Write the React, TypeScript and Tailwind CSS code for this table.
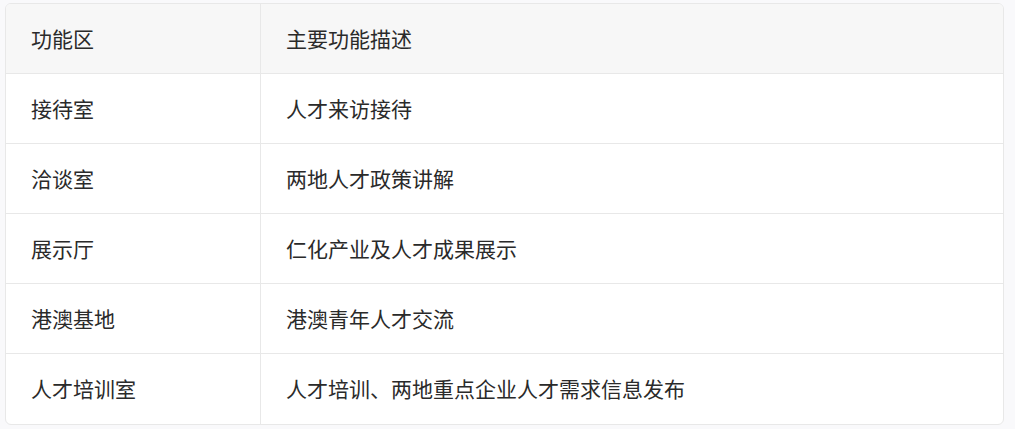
import React from "react";

const rows: [string, string][] = [
  ["接待室", "人才来访接待"],
  ["洽谈室", "两地人才政策讲解"],
  ["展示厅", "仁化产业及人才成果展示"],
  ["港澳基地", "港澳青年人才交流"],
  ["人才培训室", "人才培训、两地重点企业人才需求信息发布"],
];

export default function App() {
  return (
    <div
      className="w-[1015px] h-[429px] bg-[#f9f9fb] pt-[3px] pl-[5px]"
      style={{ fontFamily: '"Noto Sans CJK SC", "Noto Sans", sans-serif' }}
    >
      <div className="w-[999px] rounded-[6px] border border-[#e8e8e8] bg-white overflow-hidden text-[21px] text-[#2a2a2a]">
        <div className="grid grid-cols-[255px_1fr] h-[70px] bg-[#f7f7f7] border-b border-[#e8e8e8]">
          <div className="flex items-center pl-[25px] border-r border-[#e8e8e8]">功能区</div>
          <div className="flex items-center pl-[25px]">主要功能描述</div>
        </div>
        {rows.map(([a, b], i) => (
          <div
            key={a}
            className={`grid grid-cols-[255px_1fr] h-[70px] ${i < rows.length - 1 ? "border-b border-[#e8e8e8]" : ""}`}
          >
            <div className="flex items-center pl-[25px] border-r border-[#e8e8e8]">{a}</div>
            <div className="flex items-center pl-[25px]">{b}</div>
          </div>
        ))}
      </div>
    </div>
  );
}
